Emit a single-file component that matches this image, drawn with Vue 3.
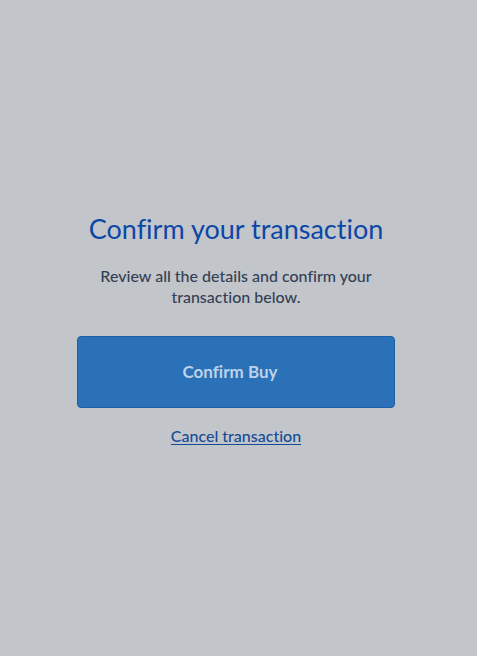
<script setup>
function confirmBuy() {}
</script>

<template>
  <main class="page">
    <h1 class="title">Confirm your transaction</h1>
    <p class="message">Review all the details and confirm your transaction below.</p>
    <button class="confirm" type="button" @click="confirmBuy">Confirm Buy</button>
    <a class="cancel" href="#">Cancel transaction</a>
  </main>
</template>

<style>
body {
  background: #c2c6cb;
}
</style>

<style scoped>
.page {
  box-sizing: border-box;
  display: flex;
  flex-direction: column;
  align-items: center;
  padding: 211px 82px 32px 77px;
  font-family: Lato, "Open Sans", sans-serif;
  font-variant-ligatures: none;
  text-align: center;
}

.title {
  margin: 0;
  color: #0d47a5;
  font-size: 27px;
  font-weight: 400;
  line-height: 36px;
  white-space: nowrap;
}

.message {
  max-width: 288px;
  margin: 18px 0 0;
  color: #343f55;
  font-size: 16px;
  font-weight: 500;
  line-height: 21px;
}

.confirm {
  box-sizing: border-box;
  align-self: stretch;
  margin: 29px 0 0;
  padding: 24px 12px 24px 0;
  border: 1px solid #1c5fa5;
  border-radius: 4px;
  background: #2b71b8;
  color: #bed2ea;
  font-family: inherit;
  font-size: 17px;
  font-weight: 700;
  line-height: 22px;
  font-variant-ligatures: none;
  cursor: pointer;
}

.cancel {
  margin-top: 17px;
  color: #164b96;
  font-size: 16px;
  font-weight: 500;
  line-height: 21px;
  text-decoration: underline;
  text-underline-offset: 2px;
}
</style>
